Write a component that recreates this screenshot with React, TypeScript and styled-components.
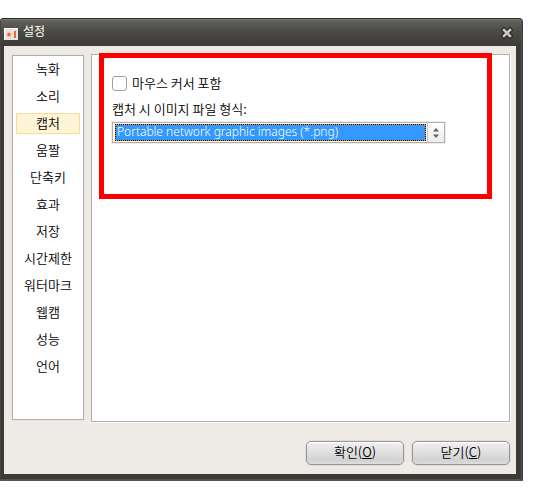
import React, { useState } from "react";
import styled, { createGlobalStyle } from "styled-components";

const GlobalStyle = createGlobalStyle`
  *, *::before, *::after { box-sizing: border-box; }
  body {
    margin: 0;
    background: #fff;
    color: #000;
    font: 350 13px/20px "Noto Sans CJK KR", sans-serif;
  }
  button, select, input { font: inherit; color: inherit; margin: 0; }
`;

const Page = styled.div`
  display: flex;
  min-height: 100vh;
  padding: 18px 33px 11px 0;
`;

const Dialog = styled.section`
  flex: 1;
  display: flex;
  flex-direction: column;
  padding: 0 6px 6px 3px;
  background: linear-gradient(#65655f 0, #4c4b46 12px, #3b3a36 28px);
  border: 1px solid #3a3934;
  border-top-color: #2c2b27;
  border-bottom-color: #55544f;
  border-left-color: #45443f;
  border-radius: 3px 4px 1px 1px;
  box-shadow: inset 0 1px #7a7973, inset -1px -1px #55544f;
`;

const TitleBar = styled.header`
  display: flex;
  align-items: center;
  height: 27px;
  padding: 0 3px 0 0;
`;

const AppIcon = styled.svg`
  display: block;
  width: 14px;
  height: 12px;
  margin-top: 2px;
`;

const Title = styled.h1`
  flex: 1;
  margin: 0 0 3px 5px;
  color: #fff;
  font-size: 12px;
  line-height: 20px;
  font-weight: 400;
`;

const CloseIconButton = styled.button`
  display: flex;
  padding: 0;
  border: 0;
  background: none;
`;

const Client = styled.div`
  flex: 1;
  display: flex;
  flex-direction: column;
  padding: 8px 6px 9px 8px;
  background: #eeebe6;
`;

const Columns = styled.div`
  flex: 1;
  display: flex;
  align-items: stretch;
  gap: 7px;
`;

const Sidebar = styled.nav`
  display: flex;
  flex-direction: column;
  gap: 6px;
  width: 72px;
  margin: 1px 0 2px;
  padding: 3px;
  background: #fff;
  border: 1px solid #b2b0ad;
  box-shadow: 0 0 0 1px #e7e5e1;
`;

const SidebarItem = styled.button<{ $active: boolean }>`
  height: 21px;
  padding: 0 0 2px;
  border: 1px solid ${(p) => (p.$active ? "#ffd89b" : "transparent")};
  background: ${(p) => (p.$active ? "#fff5d6" : "transparent")};
  line-height: 17px;
  text-align: center;
  white-space: nowrap;
`;

const Panel = styled.main`
  position: relative;
  flex: 1;
  min-width: 0;
  padding: 18px 64px 18px 20px;
  background: #fff;
  border: 1px solid #b2b0ad;
  box-shadow: 0 1px #fff, 1px 0 #fff;
`;

const Highlight = styled.div`
  position: absolute;
  top: -2px;
  left: 7px;
  right: 17px;
  height: 146px;
  border: 5px solid #f00;
  pointer-events: none;
`;

const CheckLabel = styled.label`
  display: flex;
  align-items: center;
  gap: 5px;
`;

const CheckBox = styled.input`
  appearance: none;
  width: 15px;
  height: 15px;
  background: #fff;
  border: 1px solid #a3a19e;
  border-radius: 3px;
  &:checked { background: #3399ff; box-shadow: inset 0 0 0 2px #fff; }
`;

const FieldLabel = styled.label`
  display: block;
  margin: 6px 0 3px;
`;

const SelectFrame = styled.div`
  display: grid;
  grid-template-columns: 1fr 17px;
  height: 21px;
  background: #fff;
  border: 1px solid #b2b0ad;
  box-shadow: 0 0 0 1px #eeece9;
`;

const Select = styled.select`
  grid-area: 1 / 1 / 2 / 3;
  appearance: none;
  width: 100%;
  padding: 0 18px 2px 4px;
  border: 0;
  border-radius: 0;
  outline: 0;
  color: #fff;
  font: 12px/17px "Noto Sans", "Noto Sans CJK KR", sans-serif;
  font-weight: 350;
  background: transparent;
  z-index: 1;
`;

const Selection = styled.span`
  grid-area: 1 / 1;
  margin: 1px 1px 1px 2px;
  background:
    linear-gradient(#3399ff, #3399ff) padding-box,
    linear-gradient(#ee9a3c, #ee9a3c) border-box;
  border: 1px dotted #000;
`;

const Spinner = styled.span`
  grid-area: 1 / 2;
  display: flex;
  align-items: center;
  justify-content: center;
  border-left: 1px solid #c5c3c0;
  background: linear-gradient(#fff, #ececec);
`;

const Footer = styled.footer`
  display: flex;
  justify-content: flex-end;
  gap: 8px;
  padding-top: 19px;
`;

const PushButton = styled.button`
  width: 98px;
  height: 24px;
  padding: 0 0 2px;
  line-height: 20px;
  background: linear-gradient(#f0f0f0, #dedede 50%, #d2d2d2 85%, #dedede);
  border: 1px solid #989795;
  border-radius: 5px;
  box-shadow: inset 0 1px #fff, 0 0 0 1px #e0deda;
`;

const sections = [
  "녹화", "소리", "캡처", "움짤", "단축키", "효과",
  "저장", "시간제한", "워터마크", "웹캠", "성능", "언어",
];

export default function App() {
  const [active, setActive] = useState("캡처");
  return (
    <>
      <GlobalStyle />
      <Page>
        <Dialog aria-labelledby="dialog-title">
          <TitleBar>
            <AppIcon viewBox="0 0 14 12" aria-hidden="true">
              <rect width="14" height="12" fill="#e6e4e2" />
              <path d="M.5 11.5V.5h13" fill="none" stroke="#fff" />
              <path d="M5 3.2l2.6 1 1 2.3-1 2.4-2.6 1-2.4-1-1-2.4 1-2.3z" fill="#f3d3c0" />
              <circle cx="5" cy="6.5" r="1.7" fill="#e8672a" />
              <path d="M10 3h2v7h-2z" fill="#f06a20" />
            </AppIcon>
            <Title id="dialog-title">설정</Title>
            <CloseIconButton type="button" aria-label="닫기">
              <svg width="12" height="12" viewBox="0 0 12 12">
                <path d="M3 3l6 6M9 3l-6 6" stroke="#292825" strokeWidth="5" strokeLinecap="square" />
                <path d="M3 3l6 6M9 3l-6 6" stroke="#cbcac6" strokeWidth="2.6" strokeLinecap="square" />
              </svg>
            </CloseIconButton>
          </TitleBar>
          <Client>
            <Columns>
              <Sidebar>
                {sections.map((name) => (
                  <SidebarItem
                    key={name}
                    type="button"
                    $active={name === active}
                    aria-pressed={name === active}
                    onClick={() => setActive(name)}
                  >
                    {name}
                  </SidebarItem>
                ))}
              </Sidebar>
              <Panel>
                <CheckLabel>
                  <CheckBox type="checkbox" />
                  마우스 커서 포함
                </CheckLabel>
                <FieldLabel htmlFor="format">캡처 시 이미지 파일 형식:</FieldLabel>
                <SelectFrame>
                  <Selection />
                  <Spinner>
                    <svg width="6" height="10" viewBox="0 0 6 10" aria-hidden="true">
                      <path d="M0 3.5L3 0l3 3.5zM0 6.5L3 10l3-3.5z" fill="#62615f" />
                    </svg>
                  </Spinner>
                  <Select id="format">
                    <option>Portable network graphic images (*.png)</option>
                  </Select>
                </SelectFrame>
                <Highlight />
              </Panel>
            </Columns>
            <Footer>
              <PushButton type="button">확인(<u>O</u>)</PushButton>
              <PushButton type="button">닫기(<u>C</u>)</PushButton>
            </Footer>
          </Client>
        </Dialog>
      </Page>
    </>
  );
}
